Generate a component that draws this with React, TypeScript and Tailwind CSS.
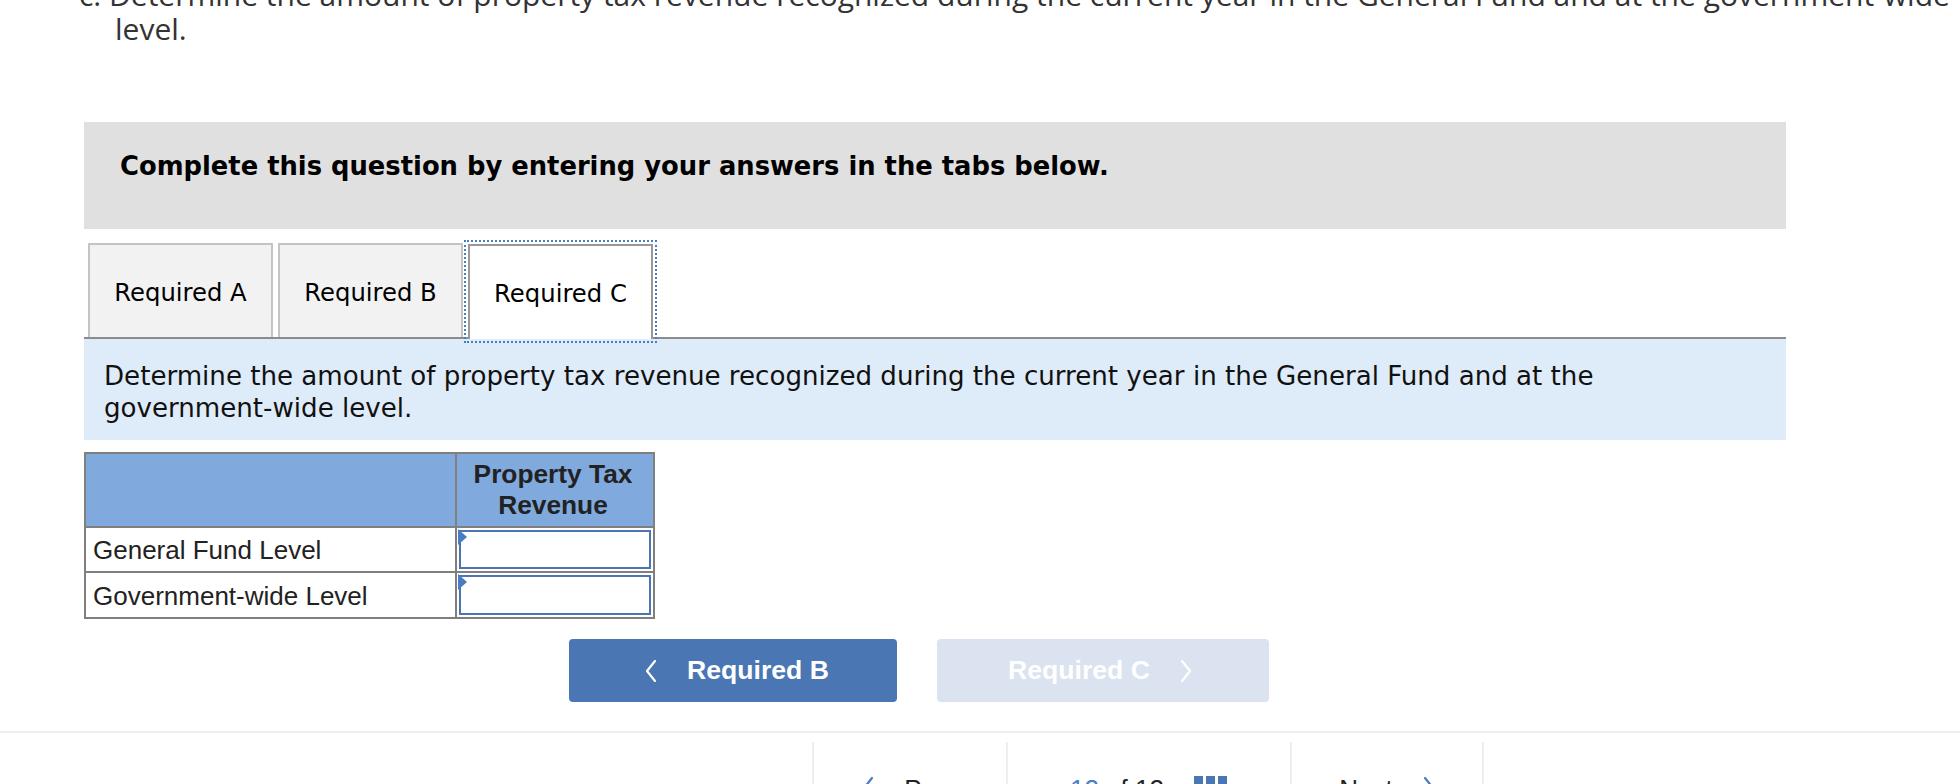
import React from "react";

const verdana = "font-['DejaVu_Sans','Verdana',sans-serif]";
const arial = "font-['Liberation_Sans',Arial,sans-serif]";

function ChevronLeft({ className }: { className?: string }) {
  return (
    <svg className={className} width="12" height="24" viewBox="0 0 12 24" fill="none">
      <polyline points="10,2 2,12 10,22" stroke="currentColor" strokeWidth="2.2" strokeLinecap="round" strokeLinejoin="round" />
    </svg>
  );
}
function ChevronRight({ className }: { className?: string }) {
  return (
    <svg className={className} width="12" height="24" viewBox="0 0 12 24" fill="none">
      <polyline points="2,2 10,12 2,22" stroke="currentColor" strokeWidth="2.2" strokeLinecap="round" strokeLinejoin="round" />
    </svg>
  );
}

function InputCell() {
  return (
    <div className="flex-1 p-[2px]">
      <div className="relative h-full border-[2.5px] border-[#4a74b4] bg-white">
        <svg className="absolute left-[-3px] top-[-3px]" width="9" height="16" viewBox="0 0 9 16">
          <polygon points="0,0 9,8 0,16" fill="#4a7cc4" />
        </svg>
      </div>
    </div>
  );
}

export default function App() {
  return (
    <div className="w-[1960px] h-[784px] overflow-hidden bg-white">
      <p className="mt-[-22px] w-[2010px] pl-[115px] indent-[-36px] text-[30px] leading-[34px] text-[#333] font-['Open_Sans',sans-serif]">
        c. Determine the amount of property tax revenue recognized during the current year in the General Fund and at the government-wide level.
      </p>

      <div className="ml-[84px] mt-[76px] w-[1702px]">
        <div className={`h-[107px] bg-[#e0e0e0] pl-[36px] pt-[28px] ${verdana} text-[25.8px] leading-[32px] font-bold text-black`}>
          Complete this question by entering your answers in the tabs below.
        </div>

        <div className={`mt-[14px] flex items-end border-b-2 border-[#8c8c8c] ${verdana} text-[24.3px] text-black`}>
          <div className="ml-[4px] flex h-[94px] w-[185px] items-center justify-center border-2 border-b-0 border-[#c4c4c4] bg-[#f2f2f2] pt-[5px]">
            Required A
          </div>
          <div className="ml-[5px] flex h-[94px] w-[185px] items-center justify-center border-2 border-b-0 border-[#c4c4c4] bg-[#f2f2f2] pt-[5px]">
            Required B
          </div>
          <div className="ml-[5px] mb-[-2px] flex h-[95px] w-[185px] items-center justify-center border-2 border-b-0 border-[#999999] bg-white pt-[3px] outline-2 outline-dotted outline-offset-[2px] outline-[#4a7cc4]">
            Required C
          </div>
        </div>

        <div className={`bg-[#deebf8] px-[20px] pt-[21px] pb-[16px] ${verdana} text-[26.1px] leading-[32px] text-[#111]`}>
          Determine the amount of property tax revenue recognized during the current year in the General Fund and at the government-wide level.
        </div>

        <div className={`mt-[12px] w-[571px] border-2 border-[#7f7f7f] ${arial} text-[26px] text-[#222]`}>
          <div className="flex h-[74px] border-b-2 border-[#7f7f7f] bg-[#80aade]">
            <div className="w-[371px] border-r-2 border-[#7f7f7f]" />
            <div className="flex flex-1 items-center justify-center text-center font-bold leading-[31px] text-[26.3px] pr-[4px]">
              Property Tax
              <br />
              Revenue
            </div>
          </div>
          <div className="flex h-[45px] border-b-2 border-[#7f7f7f]">
            <div className="flex w-[371px] items-center border-r-2 border-[#7f7f7f] pl-[7px] pt-[2px]">General Fund Level</div>
            <InputCell />
          </div>
          <div className="flex h-[44px]">
            <div className="flex w-[371px] items-center border-r-2 border-[#7f7f7f] pl-[7px] pt-[2px]">Government-wide Level</div>
            <InputCell />
          </div>
        </div>
      </div>

      <div className={`mt-[20px] flex gap-[40px] pl-[569px] ${arial} text-[26.6px] font-bold text-white`}>
        <div className="flex h-[63px] w-[328px] items-center justify-center gap-[30px] rounded-[4px] bg-[#4a76b4] pl-[8px]">
          <ChevronLeft />
          <span>Required B</span>
        </div>
        <div className="flex h-[63px] w-[332px] items-center justify-center gap-[30px] rounded-[4px] bg-[#dae3ef] pr-[6px]">
          <span>Required C</span>
          <ChevronRight />
        </div>
      </div>

      <div className="mt-[29px] h-[2px] bg-[#eeeeee]" />

      <div className={`mt-[9px] flex pl-[812px] ${arial} text-[26px] text-[#222]`}>
        <div className="flex h-[80px] w-[194px] items-start justify-center gap-[30px] border-l-2 border-[#eeeeee] pt-[28px]">
          <ChevronLeft className="mt-[6px] text-[#4a7cc4]" />
          <span>Prev</span>
        </div>
        <div className="flex h-[80px] w-[284px] items-start justify-center gap-[30px] border-l-2 border-[#eeeeee] pt-[28px]">
          <span>
            <span className="text-[#4a7cc4]">12</span> of 12
          </span>
          <svg className="mt-[6px]" width="34" height="30" viewBox="0 0 34 30">
            <rect x="0" y="0" width="9" height="9" fill="#4a76b4" />
            <rect x="12" y="0" width="9" height="9" fill="#4a76b4" />
            <rect x="24" y="0" width="9" height="9" fill="#4a76b4" />
          </svg>
        </div>
        <div className="flex h-[80px] w-[194px] items-start justify-center gap-[30px] border-x-2 border-[#eeeeee] pt-[28px]">
          <span>Next</span>
          <ChevronRight className="mt-[6px] text-[#4a7cc4]" />
        </div>
      </div>
    </div>
  );
}
